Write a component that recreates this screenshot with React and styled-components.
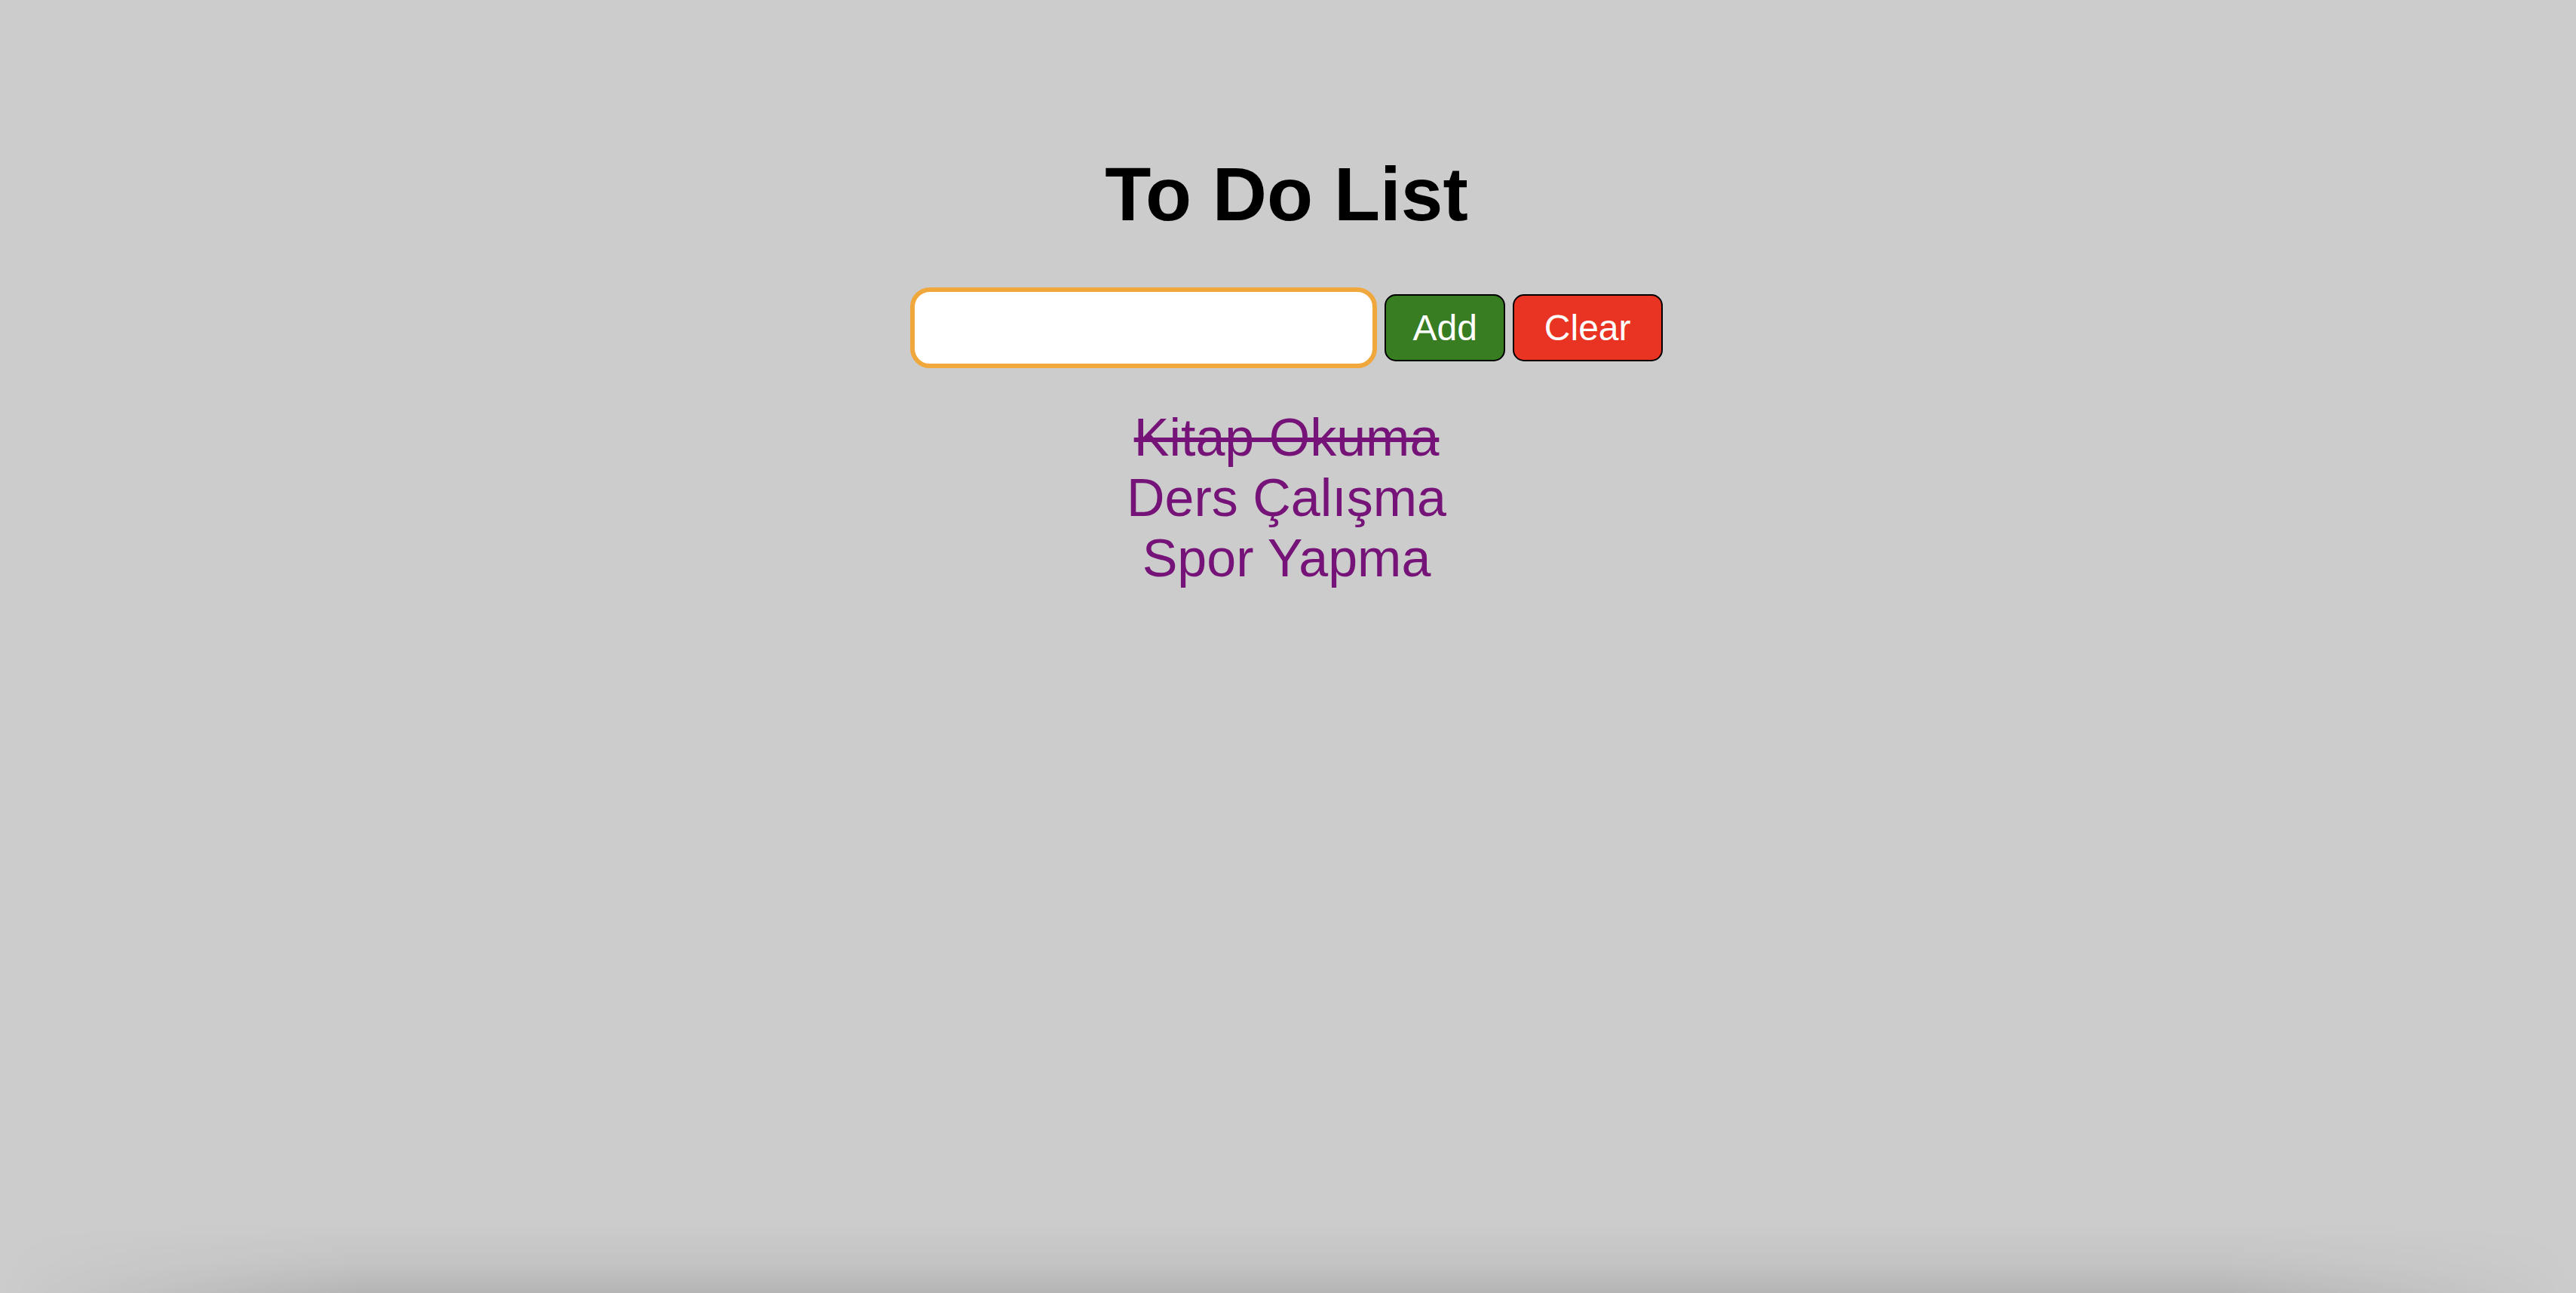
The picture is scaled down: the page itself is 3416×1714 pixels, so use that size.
import React, { useState } from "react";
import styled, { createGlobalStyle } from "styled-components";

const GlobalStyle = createGlobalStyle`
  html, body {
    margin: 0;
    padding: 0;
    background: #cccccc;
    font-family: "Liberation Sans", Arial, Helvetica, sans-serif;
  }
  #root {
    min-height: 100vh;
  }
`;

const Page = styled.div`
  min-height: 100vh;
  box-sizing: border-box;
  padding-top: 200px;
  padding-right: 4px;
  display: flex;
  flex-direction: column;
  align-items: center;
  background: #cccccc;
`;

const BottomShade = styled.div`
  position: fixed;
  left: 0;
  right: 0;
  bottom: 0;
  height: 90px;
  pointer-events: none;
  background: linear-gradient(to bottom, rgba(0, 0, 0, 0) 0%, rgba(0, 0, 0, 0.04) 55%, rgba(0, 0, 0, 0.11) 100%);
  -webkit-mask-image: linear-gradient(to right, transparent 0%, black 14%, black 86%, transparent 100%);
  mask-image: linear-gradient(to right, transparent 0%, black 14%, black 86%, transparent 100%);
`;

const Title = styled.h1`
  margin: 0;
  font-size: 100px;
  font-weight: 700;
  color: #000000;
  line-height: normal;
`;

const Controls = styled.div`
  margin-top: 66px;
  display: flex;
  align-items: center;
  gap: 10px;
`;

const TextInput = styled.input`
  box-sizing: border-box;
  width: 619px;
  height: 107px;
  border: 6px solid #f0a83c;
  border-radius: 26px;
  background: #ffffff;
  outline: none;
  padding: 0 20px;
  font-size: 48px;
  font-family: inherit;
`;

const Button = styled.button`
  box-sizing: border-box;
  height: 89px;
  padding: 0 ${(p) => p.$padX}px;
  border: 2px solid #000000;
  border-radius: 15px;
  background: ${(p) => p.$bg};
  color: #ffffff;
  font-family: inherit;
  font-size: 48px;
  line-height: 1;
  cursor: pointer;
`;

const List = styled.ul`
  list-style: none;
  margin: 52px 0 0;
  padding: 0;
  display: flex;
  flex-direction: column;
  align-items: center;
`;

const Item = styled.li`
  font-size: 70px;
  line-height: 80px;
  color: #761378;
  text-decoration: ${(p) => (p.$done ? "line-through" : "none")};
  text-decoration-thickness: 6px;
  cursor: pointer;
`;

export default function App() {
  const [items, setItems] = useState([
    { text: "Kitap Okuma", done: true },
    { text: "Ders Çalışma", done: false },
    { text: "Spor Yapma", done: false },
  ]);
  const [value, setValue] = useState("");

  const add = () => {
    if (!value.trim()) return;
    setItems([...items, { text: value.trim(), done: false }]);
    setValue("");
  };

  const toggle = (i) =>
    setItems(items.map((it, idx) => (idx === i ? { ...it, done: !it.done } : it)));

  return (
    <>
      <GlobalStyle />
      <Page>
        <Title>To Do List</Title>
        <Controls>
          <TextInput value={value} onChange={(e) => setValue(e.target.value)} />
          <Button $bg="#387d22" $padX={35} onClick={add}>
            Add
          </Button>
          <Button $bg="#e93323" $padX={40} onClick={() => setItems([])}>
            Clear
          </Button>
        </Controls>
        <List>
          {items.map((it, i) => (
            <Item key={i} $done={it.done} onClick={() => toggle(i)}>
              {it.text}
            </Item>
          ))}
        </List>
      </Page>
      <BottomShade />
    </>
  );
}
